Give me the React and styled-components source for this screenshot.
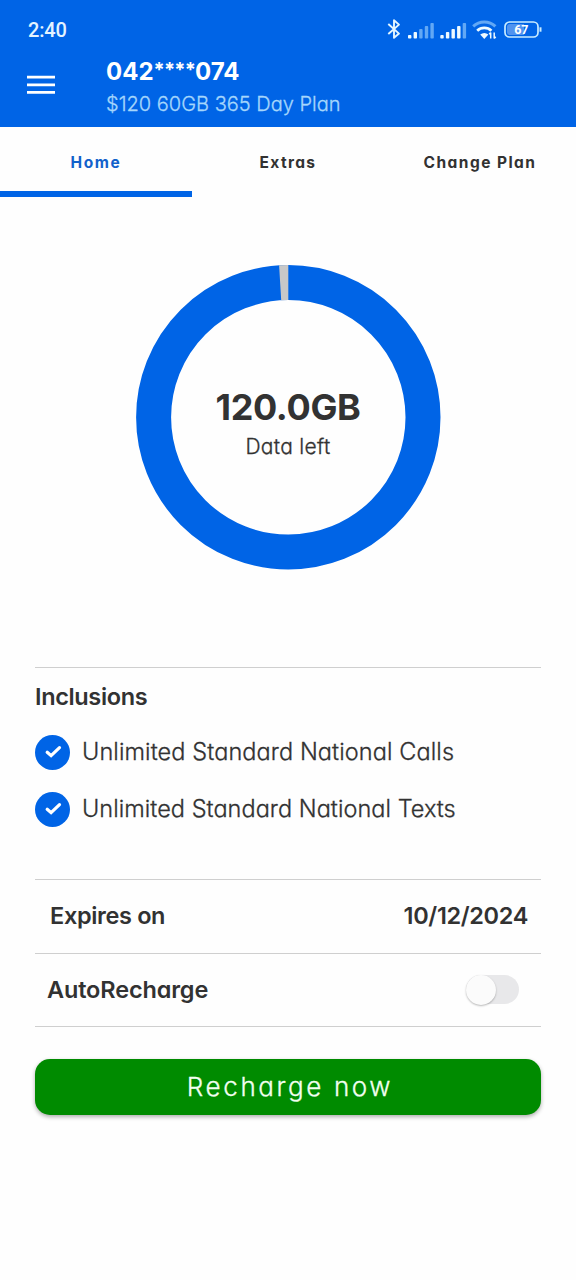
import React from "react";
import styled, { createGlobalStyle } from "styled-components";

const blue = "#0064e6";
const ink = "#323232";

const GlobalStyle = createGlobalStyle`
  * { box-sizing: border-box; }
  body {
    margin: 0;
    background: #fefefe;
    font-family: Inter, "Liberation Sans", sans-serif;
    font-feature-settings: "cv11" 1;
    color: ${ink};
  }
`;

const Screen = styled.main`
  width: 576px;
  height: 1280px;
  overflow: hidden;
  display: flex;
  flex-direction: column;
`;

const Header = styled.header`
  height: 127px;
  background: ${blue};
  color: #fff;
`;

const StatusBar = styled.div`
  height: 58px;
  padding: 2px 34px 0 28px;
  display: flex;
  align-items: center;
  justify-content: space-between;
`;

const Clock = styled.span`
  font: 500 20px/24px Roboto, sans-serif;
  letter-spacing: -0.2px;
  color: #e4f3ff;
`;

const TitleBar = styled.div`
  height: 69px;
  display: flex;
  padding-left: 27px;
`;

const MenuButton = styled.button`
  width: 28px;
  height: 19px;
  margin: 17px 51px 0 0;
  padding: 0;
  border: 0;
  background: none;
  svg { display: block; }
`;

const Account = styled.div`
  display: flex;
  flex-direction: column;
`;

const Label = styled.span`
  display: block;
  white-space: nowrap;
  font-size: ${(p) => p.$size}px;
  line-height: ${(p) => p.$line || 30}px;
  font-weight: ${(p) => p.$weight || 400};
  letter-spacing: ${(p) => p.$track || 0}px;
  color: ${(p) => p.$color || "inherit"};
`;

const LightLabel = styled(Label)`
  font-weight: 300;
  -webkit-text-stroke: 0.3px currentColor;
`;

const Mask = styled.span`
  font-size: 20px;
  line-height: 1;
  vertical-align: 3px;
  letter-spacing: -0.8px;
`;

const Tabs = styled.nav`
  height: 70px;
  display: grid;
  grid-template-columns: repeat(3, 1fr);
`;

const Tab = styled.a`
  display: flex;
  justify-content: center;
  padding-top: 20px;
  border-bottom: 6px solid ${(p) => (p.$active ? blue : "transparent")};
  color: ${(p) => (p.$active ? "#1261cb" : ink)};
`;

const Usage = styled.section`
  height: 470px;
  padding-top: 68px;
  display: flex;
  justify-content: center;
`;

const Gauge = styled.div`
  width: 305px;
  height: 305px;
  display: grid;
  > * { grid-area: 1 / 1; }
`;

const GaugeText = styled.div`
  display: flex;
  flex-direction: column;
  align-items: center;
  padding-top: 122px;
`;

const Details = styled.div`
  margin: 0 35px;
`;

const Inclusions = styled.section`
  height: 212px;
  padding-top: 13px;
  border-top: 1px solid #cfcfcf;
`;

const InclusionList = styled.div`
  padding-top: 10px;
`;

const Inclusion = styled.div`
  display: flex;
  align-items: center;
  gap: 12px;
  height: 57px;
  svg { margin-top: 2px; }
`;

const Row = styled.div`
  height: ${(p) => p.$height}px;
  padding: ${(p) => p.$padding};
  display: flex;
  align-items: center;
  justify-content: space-between;
  border-top: 1px solid #cfcfcf;
`;

const Switch = styled.div`
  width: 53px;
  height: 29px;
  margin-bottom: 1px;
  border-radius: 15px;
  background: #e8e8ea;
`;

const Knob = styled.div`
  width: 30px;
  height: 30px;
  border-radius: 50%;
  background: #fbfbfb;
  box-shadow: 0 1px 2px rgba(0, 0, 0, 0.28);
`;

const ButtonArea = styled.div`
  border-top: 1px solid #cfcfcf;
  padding-top: 32px;
`;

const RechargeButton = styled.button`
  width: 100%;
  height: 56px;
  padding: 0 0 0 4px;
  border: 0;
  border-radius: 15px;
  background: #008b00;
  color: #f2fff0;
  font-family: inherit;
  font-feature-settings: inherit;
  display: flex;
  align-items: center;
  justify-content: center;
  box-shadow: 0 2px 4px rgba(0, 0, 0, 0.32);
`;

function StatusIcons() {
  const bars = (x, lit) =>
    [0, 1, 2, 3, 4].map((i) => (
      <rect
        key={x + i}
        x={x + i * 5.6}
        y={22.6 - (3.5 + i * 3)}
        width="3.4"
        height={3.5 + i * 3}
        rx="0.8"
        fill={i < lit ? "#eefaff" : "#62a8f5"}
      />
    ));
  return (
    <svg width="156" height="28" viewBox="0 0 156 28" fill="none">
      <path d="M2.3 8 13 17.6 8 21.8V4.2l5 4.4L2.3 18" stroke="#e4f6ff" strokeWidth="1.9" strokeLinejoin="round" />
      {bars(22, 2)}
      {bars(54.3, 4)}
      <path d="M87.2 10.4a16 16 0 0 1 22.2 0" stroke="#62a8f5" strokeWidth="3" />
      <path d="M91.2 14.7a10.3 10.3 0 0 1 14.2 0" stroke="#eefaff" strokeWidth="2.8" />
      <path d="M94.2 18.6q4.1-3.4 8.2 0l-4.1 4.4z" fill="#eefaff" />
      <path d="M104.7 22.5v-6m-1.5 1.8 1.5-1.8M108.2 16.5v6m0 0 1.5-1.8" stroke="#eefaff" strokeWidth="1.5" />
      <rect x="119" y="6" width="33" height="15" rx="4.5" stroke="#c9ecff" strokeWidth="1.7" />
      <path d="M124 8h14v11h-14a3 3 0 0 1-3-3V11a3 3 0 0 1 3-3z" fill="#5093ef" />
      <path d="M154.5 11.3v4.4" stroke="#c9ecff" strokeWidth="2" />
      <text x="135.3" y="18" textAnchor="middle" fill="#fff" fontFamily="Roboto" fontSize="12.5" fontWeight="700">
        67
      </text>
    </svg>
  );
}

function CheckBadge() {
  return (
    <svg width="35" height="35" viewBox="0 0 35 35" fill="none">
      <circle cx="17.5" cy="17.5" r="17.5" fill={blue} />
      <path d="m12.2 17.3 3.9 3.4 8.4-8" stroke="#fff" strokeWidth="3.2" strokeLinecap="round" strokeLinejoin="miter" />
    </svg>
  );
}

function Ring() {
  return (
    <svg width="305" height="305" viewBox="0 0 305 305" fill="none">
      <circle cx="152.3" cy="152.3" r="134.7" stroke={blue} strokeWidth="35" />
      <path d="M152.3 0a152.3 152.3 0 0 0-9.2.28l2.1 34.93a117.5 117.5 0 0 1 7.1-.21z" fill="#c8c8c8" />
    </svg>
  );
}

export default function App() {
  return (
    <Screen>
      <GlobalStyle />
      <Header>
        <StatusBar>
          <Clock>2:40</Clock>
          <StatusIcons />
        </StatusBar>
        <TitleBar>
          <MenuButton aria-label="Menu">
            <svg width="28" height="19" viewBox="0 0 28 19">
              <path d="M0 2.2h28M0 9.8h28M0 17.4h28" stroke="#fff" strokeWidth="2.7" />
            </svg>
          </MenuButton>
          <Account>
            <Label $size={24} $weight={700} $line={27}>042<Mask>****</Mask>074</Label>
            <LightLabel $size={20} $line={38} $color="#a5d6fc">$120 60GB 365 Day Plan</LightLabel>
          </Account>
        </TitleBar>
      </Header>
      <Tabs>
        <Tab $active><Label $size={15.5} $weight={700} $line={31} $track={1.6}>Home</Label></Tab>
        <Tab><Label $size={15.5} $weight={700} $line={31} $track={1.35}>Extras</Label></Tab>
        <Tab><Label $size={15.5} $weight={700} $line={31} $track={1.45}>Change Plan</Label></Tab>
      </Tabs>
      <Usage>
        <Gauge>
          <Ring />
          <GaugeText>
            <Label $size={36} $weight={700} $line={40} $track={-0.35}>120.0GB</Label>
            <LightLabel $size={21} $line={40} $track={0.3}>Data left</LightLabel>
          </GaugeText>
        </Gauge>
      </Usage>
      <Details>
        <Inclusions>
          <Label $size={23.5} $weight={600} $line={32} $track={-0.35}>Inclusions</Label>
          <InclusionList>
            <Inclusion><CheckBadge /><LightLabel $size={23.5} $track={0.1}>Unlimited Standard National Calls</LightLabel></Inclusion>
            <Inclusion><CheckBadge /><LightLabel $size={23.5} $track={0.04}>Unlimited Standard National Texts</LightLabel></Inclusion>
          </InclusionList>
        </Inclusions>
        <Row $height={74} $padding="0 13px 2px 15px">
          <Label $size={23.5} $weight={600} $track={-0.35}>Expires on</Label>
          <Label $size={23.5} $weight={600} $track={-0.35}>10/12/2024</Label>
        </Row>
        <Row $height={73} $padding="0 22px 0 12px">
          <Label $size={23.5} $weight={600} $track={-0.15}>AutoRecharge</Label>
          <Switch><Knob /></Switch>
        </Row>
        <ButtonArea>
          <RechargeButton><LightLabel $size={26} $track={2.6}>Recharge now</LightLabel></RechargeButton>
        </ButtonArea>
      </Details>
    </Screen>
  );
}
